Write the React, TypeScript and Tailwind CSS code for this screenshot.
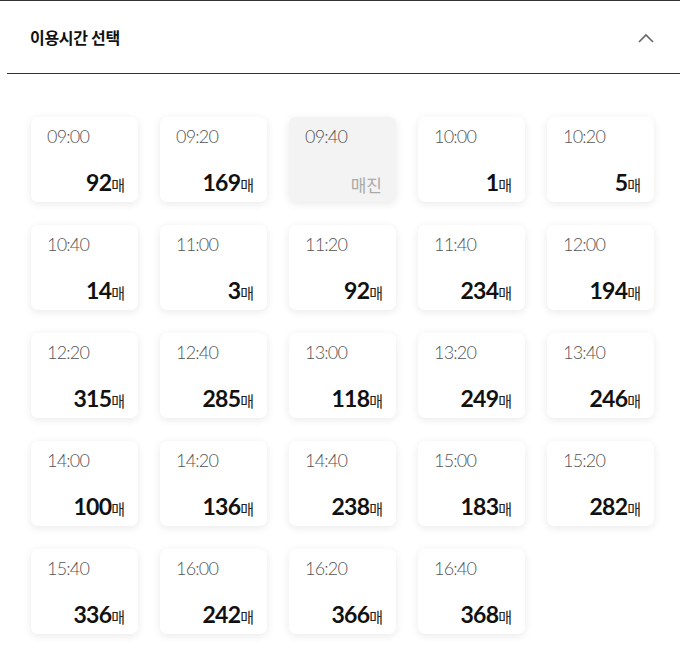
import React from "react";

const slots: [string, number | null][] = [
  ["09:00", 92], ["09:20", 169], ["09:40", null], ["10:00", 1], ["10:20", 5],
  ["10:40", 14], ["11:00", 3], ["11:20", 92], ["11:40", 234], ["12:00", 194],
  ["12:20", 315], ["12:40", 285], ["13:00", 118], ["13:20", 249], ["13:40", 246],
  ["14:00", 100], ["14:20", 136], ["14:40", 238], ["15:00", 183], ["15:20", 282],
  ["15:40", 336], ["16:00", 242], ["16:20", 366], ["16:40", 368],
];

const kr = { fontFamily: '"Noto Sans CJK KR", "Noto Sans", sans-serif' };
const lato = { fontFamily: 'Lato, "Noto Sans CJK KR", sans-serif' };

export default function App() {
  return (
    <div className="w-[680px] bg-white border-t border-[#333]">
      <div className="ml-[7px] h-[73px] border-b border-[#333] flex items-center justify-between pl-[23px] pr-[26px]">
        <span className="text-[16px] font-bold text-[#111] tracking-[-0.3px]" style={kr}>
          이용시간 선택
        </span>
        <svg width="16" height="10" viewBox="0 0 16 10" className="mt-[1px]">
          <path d="M1 9 L8 2 L15 9" fill="none" stroke="#666" strokeWidth="1.6" />
        </svg>
      </div>
      <div className="pl-[31px] pt-[43px] pb-[20px] grid grid-cols-[repeat(5,107px)] gap-x-[22px] gap-y-[23px]">
        {slots.map(([t, n]) => (
          <div
            key={t}
            className={`h-[85px] rounded-[7px] shadow-[0_2px_8px_rgba(0,0,0,0.09)] flex flex-col justify-between pl-[16px] pr-[13px] pt-[7px] pb-[3px] ${
              n === null ? "bg-[#f3f3f3]" : "bg-white"
            }`}
          >
            <div className="text-[18px] font-light text-[#555] tracking-[-0.8px] leading-[24px]" style={lato}>
              {t}
            </div>
            {n === null ? (
              <div className="text-right text-[17px] text-[#aaa] leading-[26px] pb-[1px] pr-[1px]" style={kr}>
                매진
              </div>
            ) : (
              <div className="text-right leading-[28px] flex items-baseline justify-end">
                <span className="text-[23px] font-bold text-[#111] tracking-[-0.8px]" style={lato}>
                  {n}
                </span>
                <span className="text-[15px] text-[#222]" style={kr}>
                  매
                </span>
              </div>
            )}
          </div>
        ))}
      </div>
    </div>
  );
}
